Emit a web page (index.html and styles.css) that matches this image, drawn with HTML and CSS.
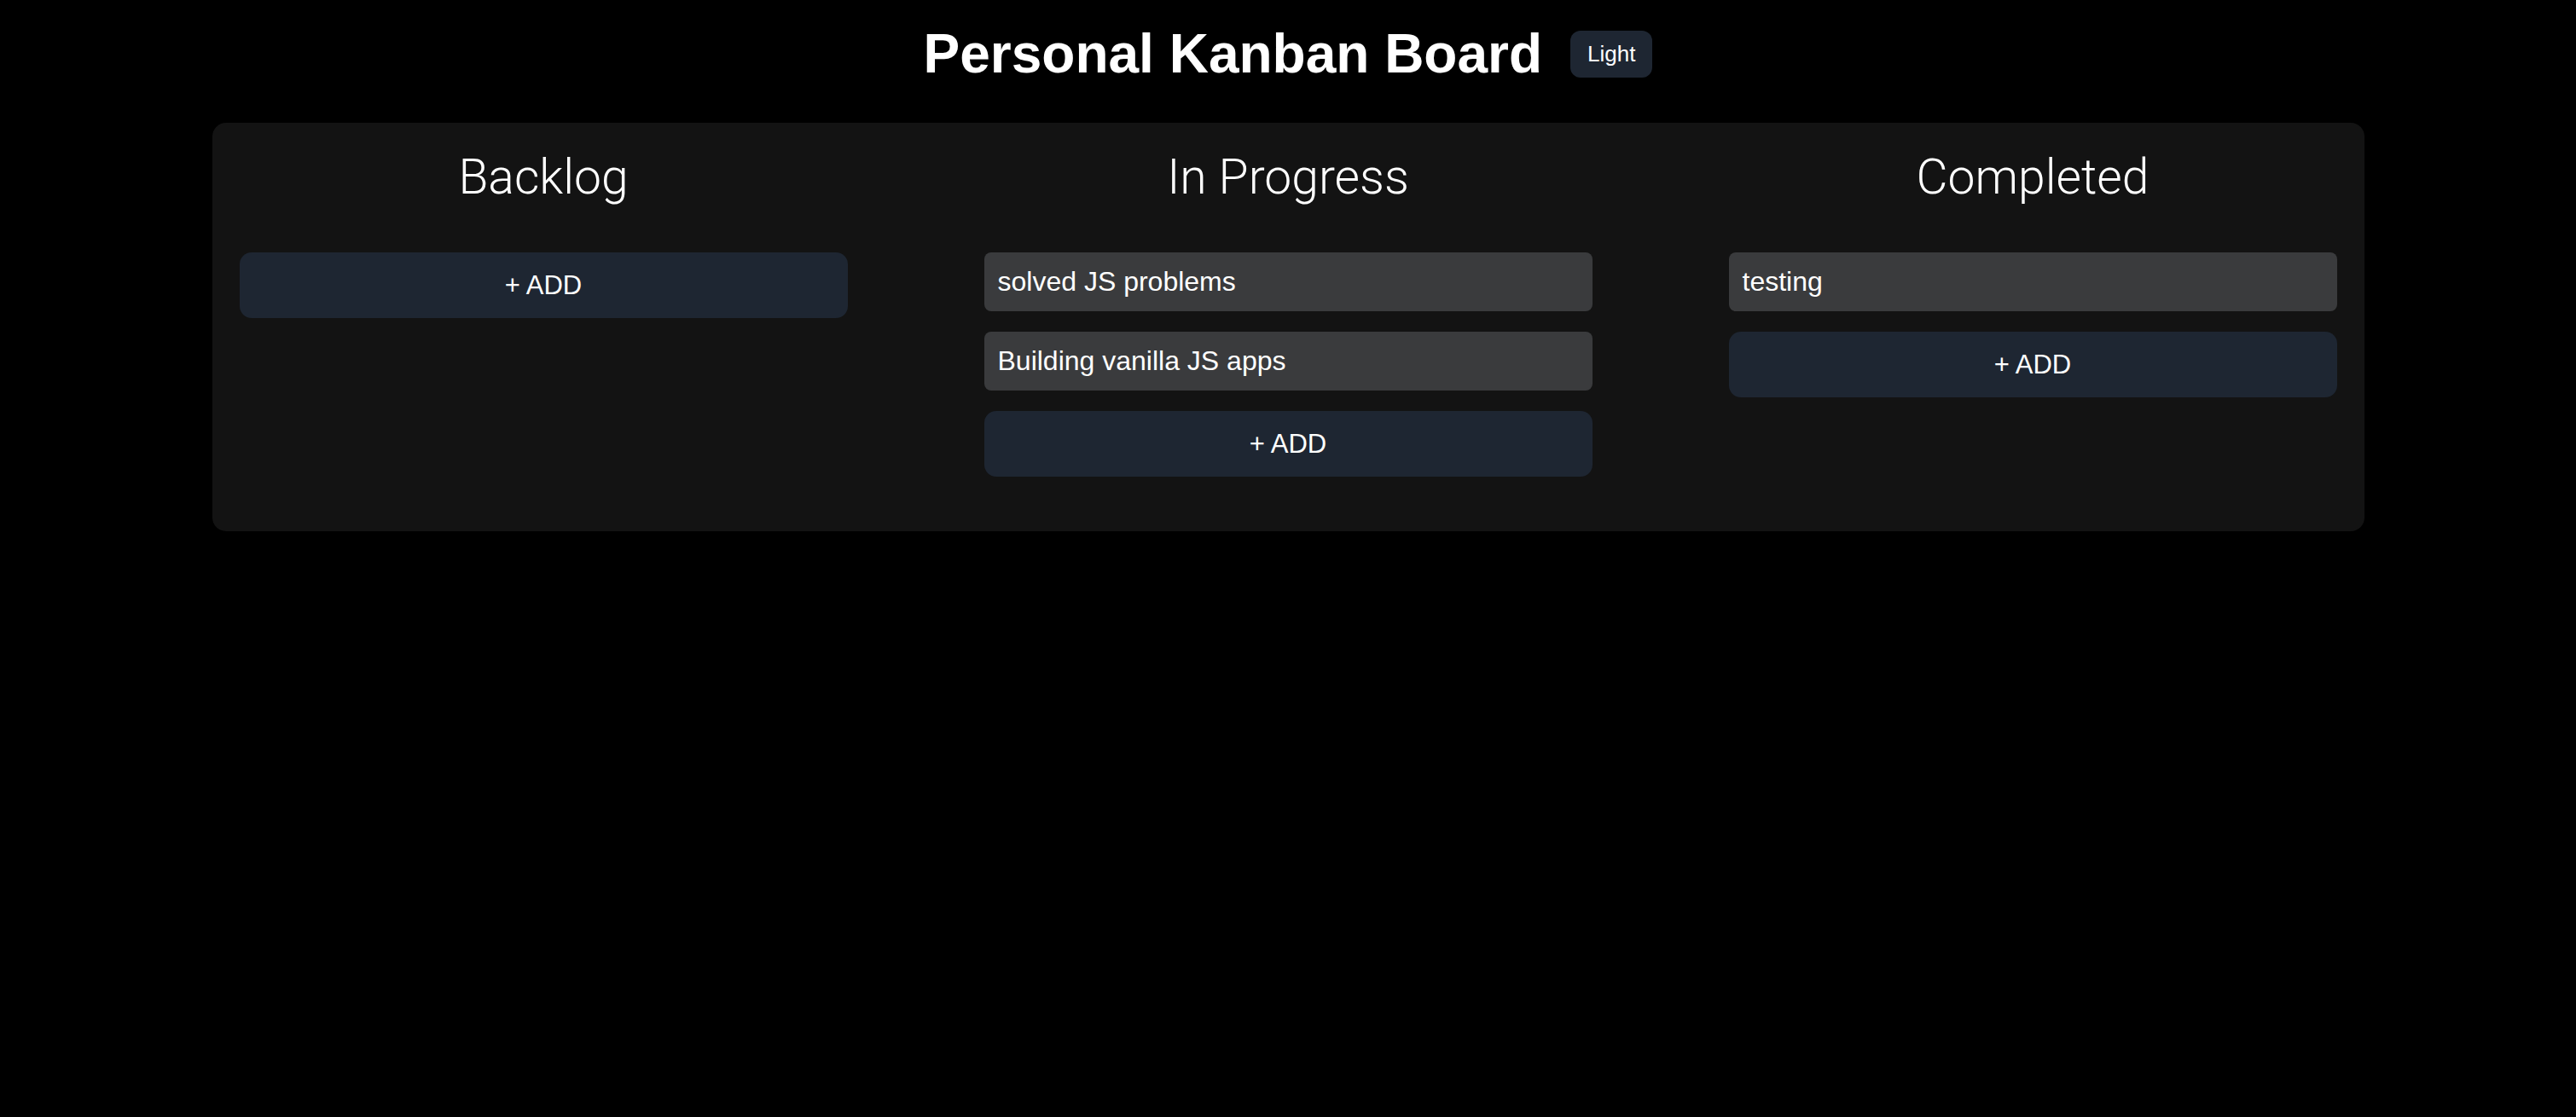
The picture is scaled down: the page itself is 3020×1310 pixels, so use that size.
FILE: index.html
```html
<!DOCTYPE html>
<html lang="en">
<head>
<meta charset="utf-8">
<title>Personal Kanban Board</title>
<link rel="stylesheet" href="styles.css">
</head>
<body>
<header class="header">
  <h1 class="title">Personal Kanban Board</h1>
  <button class="theme-btn">Light</button>
</header>
<main class="board">
  <section class="column">
    <h2 class="column-title">Backlog</h2>
    <button class="add-btn">+ ADD</button>
  </section>
  <section class="column">
    <h2 class="column-title">In Progress</h2>
    <div class="card">solved JS problems</div>
    <div class="card">Building vanilla JS apps</div>
    <button class="add-btn">+ ADD</button>
  </section>
  <section class="column">
    <h2 class="column-title">Completed</h2>
    <div class="card">testing</div>
    <button class="add-btn">+ ADD</button>
  </section>
</main>
</body>
</html>
```

FILE: styles.css
```css
* { box-sizing: border-box; }

body {
  margin: 0;
  background: #000;
  color: #fff;
  font-family: "Liberation Sans", Arial, sans-serif;
}

.header {
  display: flex;
  justify-content: center;
  align-items: center;
  gap: 33px;
  padding-top: 27px;
}

.title {
  margin: 0;
  font-size: 64px;
  line-height: 72px;
  font-weight: 700;
}

.theme-btn {
  height: 55px;
  padding: 0 20px;
  border: none;
  border-radius: 12px;
  background: #1e2632;
  color: #fff;
  font-family: "Liberation Sans", Arial, sans-serif;
  font-size: 26px;
}

.board {
  width: 2523px;
  margin: 45px auto 0;
  padding: 32px 32px 64px;
  background: #131313;
  border-radius: 16px;
  display: grid;
  grid-template-columns: repeat(3, 1fr);
  column-gap: 160px;
  align-items: start;
}

.column {
  display: flex;
  flex-direction: column;
  gap: 24px;
}

.column-title {
  margin: 0 0 32px;
  text-align: center;
  font-family: Roboto, "Liberation Sans", sans-serif;
  font-weight: 300;
  font-size: 57px;
  line-height: 64px;
}

.card {
  padding: 16px;
  background: #3a3b3d;
  border-radius: 8px;
  font-size: 32px;
  line-height: 37px;
}

.add-btn {
  padding: 21px 0;
  border: none;
  border-radius: 14px;
  background: #1e2632;
  color: #fff;
  font-family: "Liberation Sans", Arial, sans-serif;
  font-size: 31px;
  line-height: 35px;
}
```
